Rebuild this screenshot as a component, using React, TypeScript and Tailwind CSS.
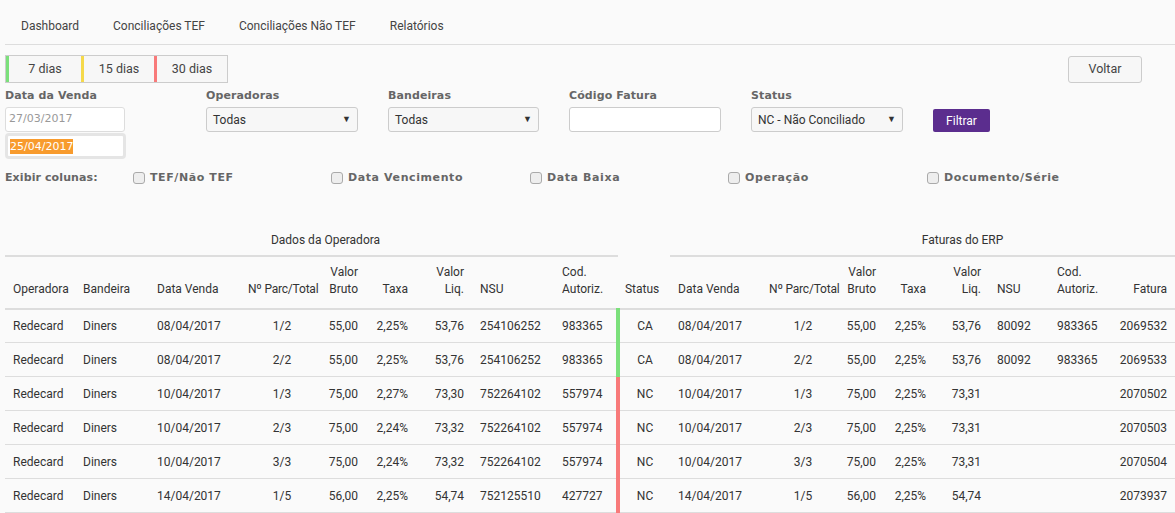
import React from 'react';

type Row = {
  op: string; band: string; data: string; parc: string; bruto: string; taxa: string; liq: string; nsu: string; aut: string;
  status: 'CA' | 'NC';
  eData: string; eParc: string; eBruto: string; eTaxa: string; eLiq: string; eNsu: string; eAut: string; fatura: string;
};

const rows: Row[] = [
  { op: 'Redecard', band: 'Diners', data: '08/04/2017', parc: '1/2', bruto: '55,00', taxa: '2,25%', liq: '53,76', nsu: '254106252', aut: '983365', status: 'CA', eData: '08/04/2017', eParc: '1/2', eBruto: '55,00', eTaxa: '2,25%', eLiq: '53,76', eNsu: '80092', eAut: '983365', fatura: '2069532' },
  { op: 'Redecard', band: 'Diners', data: '08/04/2017', parc: '2/2', bruto: '55,00', taxa: '2,25%', liq: '53,76', nsu: '254106252', aut: '983365', status: 'CA', eData: '08/04/2017', eParc: '2/2', eBruto: '55,00', eTaxa: '2,25%', eLiq: '53,76', eNsu: '80092', eAut: '983365', fatura: '2069533' },
  { op: 'Redecard', band: 'Diners', data: '10/04/2017', parc: '1/3', bruto: '75,00', taxa: '2,27%', liq: '73,30', nsu: '752264102', aut: '557974', status: 'NC', eData: '10/04/2017', eParc: '1/3', eBruto: '75,00', eTaxa: '2,25%', eLiq: '73,31', eNsu: '', eAut: '', fatura: '2070502' },
  { op: 'Redecard', band: 'Diners', data: '10/04/2017', parc: '2/3', bruto: '75,00', taxa: '2,24%', liq: '73,32', nsu: '752264102', aut: '557974', status: 'NC', eData: '10/04/2017', eParc: '2/3', eBruto: '75,00', eTaxa: '2,25%', eLiq: '73,31', eNsu: '', eAut: '', fatura: '2070503' },
  { op: 'Redecard', band: 'Diners', data: '10/04/2017', parc: '3/3', bruto: '75,00', taxa: '2,24%', liq: '73,32', nsu: '752264102', aut: '557974', status: 'NC', eData: '10/04/2017', eParc: '3/3', eBruto: '75,00', eTaxa: '2,25%', eLiq: '73,31', eNsu: '', eAut: '', fatura: '2070504' },
  { op: 'Redecard', band: 'Diners', data: '14/04/2017', parc: '1/5', bruto: '56,00', taxa: '2,25%', liq: '54,74', nsu: '752125510', aut: '427727', status: 'NC', eData: '14/04/2017', eParc: '1/5', eBruto: '56,00', eTaxa: '2,25%', eLiq: '54,74', eNsu: '', eAut: '', fatura: '2073937' },
];

const widths = [70, 74, 91, 84, 42, 50, 56, 82, 64, 52, 91, 84, 39, 50, 55, 60, 60, 66];

const Caret = () => <span className="text-[9px] text-[#333]">▼</span>;

const SelectBox = ({ value, w }: { value: string; w: string }) => (
  <div className={`${w} h-[25px] border border-[#ccc] rounded-[3px] bg-[#f7f7f7] flex items-center justify-between pl-[6px] pr-[6px] text-[12px] text-[#333]`}>
    <span>{value}</span>
    <Caret />
  </div>
);

const Check = ({ label, w }: { label: string; w: string }) => (
  <div className={`${w} flex items-center gap-[5px]`}>
    <span className="w-[12px] h-[12px] border border-[#aaa] rounded-[3px] bg-[#eee]" />
    <span className="font-bold text-[11px] text-[#666] tracking-[0.6px] font-['DejaVu_Sans',sans-serif]">{label}</span>
  </div>
);

export default function App() {
  const label = "font-bold text-[11px] text-[#666] font-['DejaVu_Sans',sans-serif] leading-[16px] tracking-[0.1px]";
  const th = 'px-[8px] pb-[10px] align-bottom font-normal leading-[17px]';
  const td = 'px-[8px] h-[34px] border-b border-[#ddd]';
  return (
    <div className="min-h-screen bg-[#fafafa] font-['Roboto',sans-serif] text-[12px] text-[#333] pl-[5px]">
      <nav className="flex items-center h-[45px] pt-[8px] border-b border-[#ddd] pl-[16px] text-[12px] text-[#444]">
        <span className="mr-[34px]">Dashboard</span>
        <span className="mr-[34px]">Conciliações TEF</span>
        <span className="mr-[34px]">Conciliações Não TEF</span>
        <span>Relatórios</span>
      </nav>

      <div className="flex items-start justify-between mt-[10px] pr-[33px]">
        <div className="flex h-[28px] border border-[#ccc] bg-[#f7f7f7] text-[12.5px] text-[#444]">
          <div className="w-[75px] border-l-[3px] border-[#7be07b] flex items-center justify-center">7 dias</div>
          <div className="w-[73px] border-l-[3px] border-[#f5d94a] flex items-center justify-center">15 dias</div>
          <div className="w-[73px] border-l-[3px] border-[#f87a7a] flex items-center justify-center">30 dias</div>
        </div>
        <div className="mt-[1px] w-[74px] h-[27px] border border-[#ccc] rounded-[3px] bg-[#f7f7f7] flex items-center justify-center text-[12.5px] text-[#444]">Voltar</div>
      </div>

      <div className="flex mt-[5px]">
        <div className="w-[201px]">
          <div className={label}>Data da Venda</div>
          <div className="mt-[3px] w-[120px] h-[25px] border border-[#ddd] rounded-[3px] bg-white flex items-center pl-[3px] text-[11px] text-[#999] font-['DejaVu_Sans',sans-serif]">27/03/2017</div>
          <div className="mt-[1px] w-[121px] h-[26px] border-[3px] border-[#e5e5e5] rounded-[4px] bg-white flex items-center pl-[2px]">
            <span className="bg-[#f89b2d] text-white text-[11px] font-['DejaVu_Sans',sans-serif] leading-[15px]">25/04/2017</span>
          </div>
        </div>
        <div className="w-[182px]">
          <div className={label}>Operadoras</div>
          <div className="mt-[3px]"><SelectBox value="Todas" w="w-[152px]" /></div>
        </div>
        <div className="w-[181px]">
          <div className={label}>Bandeiras</div>
          <div className="mt-[3px]"><SelectBox value="Todas" w="w-[151px]" /></div>
        </div>
        <div className="w-[182px]">
          <div className={label}>Código Fatura</div>
          <div className="mt-[3px] w-[152px] h-[25px] border border-[#ccc] rounded-[3px] bg-white" />
        </div>
        <div className="w-[182px]">
          <div className={label}>Status</div>
          <div className="mt-[3px]"><SelectBox value="NC - Não Conciliado" w="w-[152px]" /></div>
        </div>
        <div className="pt-[21px]">
          <div className="w-[57px] h-[23px] rounded-[2px] bg-[#5b2d8e] text-white text-[12px] flex items-center justify-center">Filtrar</div>
        </div>
      </div>

      <div className="flex items-center mt-[11px]">
        <div className={`${label} w-[128px]`}>Exibir colunas:</div>
        <Check label="TEF/Não TEF" w="w-[198px]" />
        <Check label="Data Vencimento" w="w-[199px]" />
        <Check label="Data Baixa" w="w-[198px]" />
        <Check label="Operação" w="w-[199px]" />
        <Check label="Documento/Série" w="w-auto" />
      </div>

      <table className="table-fixed border-collapse mt-[38px] w-[1170px] text-[12px] text-[#333]">
        <colgroup>
          {widths.map((w, i) => <col key={i} style={{ width: w }} />)}
        </colgroup>
        <thead>
          <tr className="h-[31px]">
            <th colSpan={9} className="border-b-2 border-[#ddd] font-normal text-center pl-[28px] pr-[0px] pb-[6px] align-bottom">Dados da Operadora</th>
            <th className="font-normal" />
            <th colSpan={8} className="border-b-2 border-[#ddd] font-normal text-center pl-[80px] pb-[6px] align-bottom">Faturas do ERP</th>
          </tr>
          <tr className="h-[53px] border-b-2 border-[#ddd]">
            <th className={`${th} text-left`}>Operadora</th>
            <th className={`${th} text-left`}>Bandeira</th>
            <th className={`${th} text-left`}>Data Venda</th>
            <th className={`${th} text-center whitespace-nowrap px-0 tracking-[-0.2px]`}>Nº Parc/Total</th>
            <th className={`${th} text-right pl-0`}>Valor<br />Bruto</th>
            <th className={`${th} text-right`}>Taxa</th>
            <th className={`${th} text-right`}>Valor<br />Liq.</th>
            <th className={`${th} text-left`}>NSU</th>
            <th className={`${th} text-left`}>Cod.<br />Autoriz.</th>
            <th className={`${th} text-center px-0 pl-[4px]`}>Status</th>
            <th className={`${th} text-left`}>Data Venda</th>
            <th className={`${th} text-center whitespace-nowrap px-0 tracking-[-0.2px]`}>Nº Parc/Total</th>
            <th className={`${th} text-right pl-0`}>Valor<br />Bruto</th>
            <th className={`${th} text-right`}>Taxa</th>
            <th className={`${th} text-right`}>Valor<br />Liq.</th>
            <th className={`${th} text-left`}>NSU</th>
            <th className={`${th} text-left`}>Cod.<br />Autoriz.</th>
            <th className={`${th} text-right`}>Fatura</th>
          </tr>
        </thead>
        <tbody>
          {rows.map((r, i) => (
            <tr key={i}>
              <td className={`${td} text-left`}>{r.op}</td>
              <td className={`${td} text-left`}>{r.band}</td>
              <td className={`${td} text-left`}>{r.data}</td>
              <td className={`${td} text-center`}>{r.parc}</td>
              <td className={`${td} text-right pl-0`}>{r.bruto}</td>
              <td className={`${td} text-right`}>{r.taxa}</td>
              <td className={`${td} text-right`}>{r.liq}</td>
              <td className={`${td} text-left`}>{r.nsu}</td>
              <td className={`${td} text-left`}>{r.aut}</td>
              <td className={`${td} text-center px-0 border-l-4 ${r.status === 'CA' ? 'border-l-[#7be07b]' : 'border-l-[#f87a7a]'}`}>{r.status}</td>
              <td className={`${td} text-left`}>{r.eData}</td>
              <td className={`${td} text-center`}>{r.eParc}</td>
              <td className={`${td} text-right pl-0`}>{r.eBruto}</td>
              <td className={`${td} text-right`}>{r.eTaxa}</td>
              <td className={`${td} text-right`}>{r.eLiq}</td>
              <td className={`${td} text-left`}>{r.eNsu}</td>
              <td className={`${td} text-left`}>{r.eAut}</td>
              <td className={`${td} text-right`}>{r.fatura}</td>
            </tr>
          ))}
        </tbody>
      </table>
    </div>
  );
}
